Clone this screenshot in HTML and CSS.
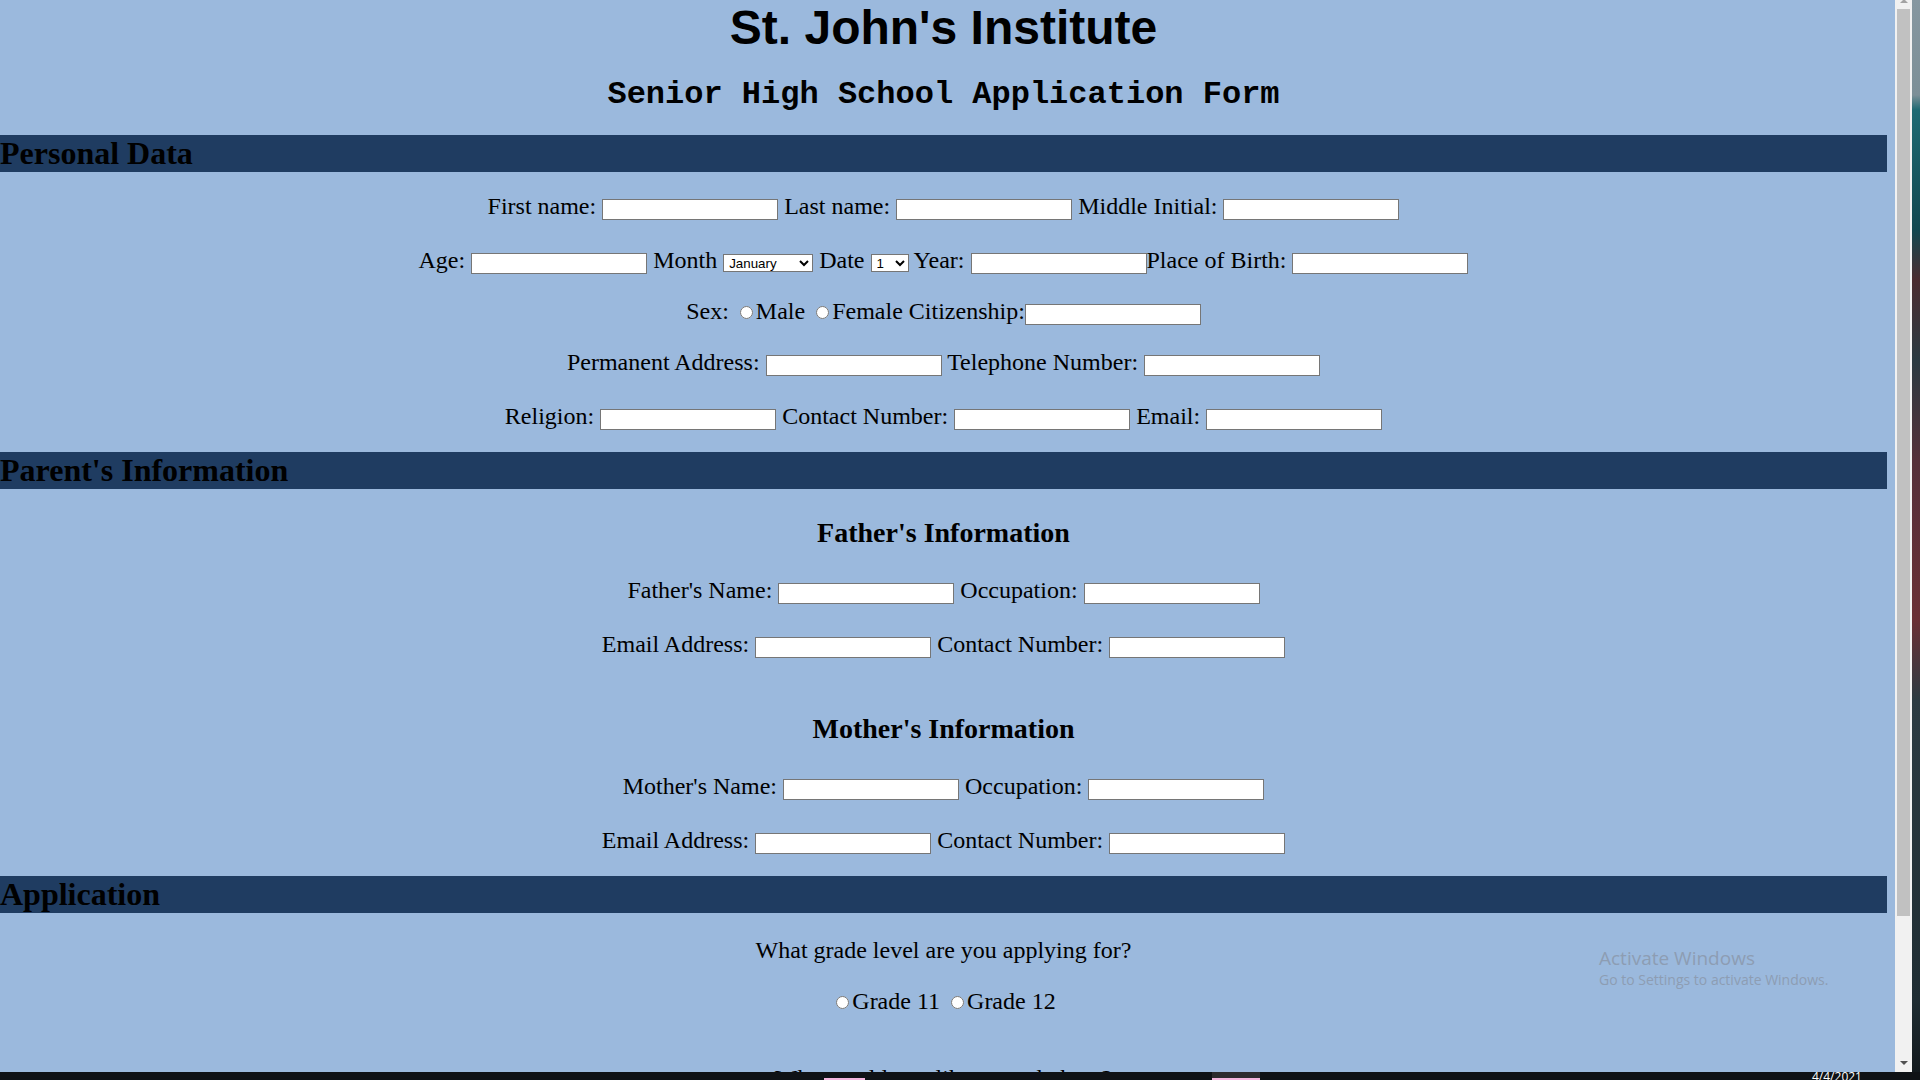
FILE: index.html
```html
<!DOCTYPE html>
<html lang="en">
<head>
<meta charset="utf-8">
<title>St. John's Institute - Application Form</title>
<link rel="stylesheet" href="styles.css">
</head>
<body>
<div class="screen">
  <div class="window">
    <main class="page">
      <div class="content">
        <h1 class="title">St. John's Institute</h1>
        <h2 class="subtitle">Senior High School Application Form</h2>

        <section class="section">
          <h2 class="bar bar-personal">Personal Data</h2>
          <div class="row p1">First name: <input class="field" type="text"> Last name: <input class="field" type="text"> Middle Initial: <input class="field" type="text"></div>
          <div class="row p2">Age: <input class="field" type="text"> Month <select class="pick pick-month"><option>January</option><option>February</option><option>March</option><option>April</option><option>May</option><option>June</option><option>July</option><option>August</option><option>September</option><option>October</option><option>November</option><option>December</option></select> Date <select class="pick pick-date"><option>1</option><option>2</option><option>3</option><option>4</option><option>5</option><option>6</option><option>7</option><option>8</option><option>9</option><option>10</option><option>11</option><option>12</option><option>13</option><option>14</option><option>15</option><option>16</option><option>17</option><option>18</option><option>19</option><option>20</option><option>21</option><option>22</option><option>23</option><option>24</option><option>25</option><option>26</option><option>27</option><option>28</option><option>29</option><option>30</option><option>31</option></select> Year: <input class="field" type="text">Place of Birth: <input class="field" type="text"></div>
          <div class="row p3">Sex: <input class="radio" type="radio" name="sex">Male <input class="radio" type="radio" name="sex">Female Citizenship:<input class="field" type="text"></div>
          <div class="row p4">Permanent Address: <input class="field" type="text"> Telephone Number: <input class="field" type="text"></div>
          <div class="row p5">Religion: <input class="field" type="text"> Contact Number: <input class="field" type="text"> Email: <input class="field" type="text"></div>
        </section>

        <section class="section">
          <h2 class="bar bar-parents">Parent's Information</h2>
          <h3 class="heading father-head">Father's Information</h3>
          <div class="row f1">Father's Name: <input class="field" type="text"> Occupation: <input class="field" type="text"></div>
          <div class="row f2">Email Address: <input class="field" type="text"> Contact Number: <input class="field" type="text"></div>
          <h3 class="heading mother-head">Mother's Information</h3>
          <div class="row m1">Mother's Name: <input class="field" type="text"> Occupation: <input class="field" type="text"></div>
          <div class="row m2">Email Address: <input class="field" type="text"> Contact Number: <input class="field" type="text"></div>
        </section>

        <section class="section">
          <h2 class="bar bar-app">Application</h2>
          <div class="row a1">What grade level are you applying for?</div>
          <div class="row a2"><input class="radio" type="radio" name="grade">Grade 11 <input class="radio" type="radio" name="grade">Grade 12</div>
          <div class="row a3">Why would you like to study here?</div>
        </section>
      </div>

      <div class="watermark">
        <div class="wm-title">Activate Windows</div>
        <div class="wm-sub">Go to Settings to activate Windows.</div>
      </div>
    </main>

    <div class="scrollbar">
      <span class="arrow-up"></span>
      <span class="thumb"></span>
      <span class="arrow-down"></span>
    </div>

    <div class="desktop"></div>
  </div>

  <div class="taskbar">
    <span class="task task-one"></span>
    <span class="task task-two"></span>
    <span class="clock">4/4/2021</span>
  </div>
</div>
</body>
</html>
```

FILE: styles.css
```css
html, body {
  margin: 0;
  padding: 0;
  height: 100%;
  overflow: hidden;
}

body {
  background: #0f1216;
  font-family: "Liberation Serif", "Times New Roman", serif;
  color: #000;
}

.screen {
  width: 1920px;
  height: 1080px;
  display: flex;
  flex-direction: column;
}

.window {
  display: flex;
  height: 1072px;
  flex: none;
}

.page {
  position: relative;
  width: 1895px;
  flex: none;
  background: #9bb9dd;
  overflow: hidden;
}

.content {
  width: 1887px;
}

.title {
  font-family: "Liberation Sans", Arial, sans-serif;
  font-weight: bold;
  font-size: 48px;
  line-height: 55px;
  margin: 0;
  text-align: center;
}

.subtitle {
  font-family: "Liberation Mono", "Courier New", monospace;
  font-weight: bold;
  font-size: 32px;
  line-height: 36px;
  margin: 22px 0 0;
  text-align: center;
}

.bar {
  background: #1f3c61;
  font-size: 32px;
  font-weight: bold;
  line-height: 37px;
  height: 37px;
  margin: 0;
  padding: 0;
  text-align: left;
}

.bar-personal { margin-top: 22px; }
.bar-parents { margin-top: 21px; }
.bar-app { margin-top: 21px; }

.row {
  font-size: 24px;
  line-height: 30px;
  text-align: center;
  white-space: nowrap;
}

.p1 { margin-top: 19px; }
.p2 { margin-top: 24px; }
.p3 { margin-top: 21px; }
.p4 { margin-top: 21px; }
.p5 { margin-top: 24px; }

.heading {
  font-size: 28px;
  font-weight: bold;
  line-height: 32px;
  text-align: center;
  margin: 0;
}

.father-head { margin-top: 28px; }
.f1 { margin-top: 26px; }
.f2 { margin-top: 24px; }
.mother-head { margin-top: 54px; }
.m1 { margin-top: 26px; }
.m2 { margin-top: 24px; }

.a1 { margin-top: 22px; }
.a2 { margin-top: 21px; }
.a3 { margin-top: 47px; }

.field {
  box-sizing: border-box;
  width: 176px;
  height: 21px;
  margin: 0;
  padding: 1px 2px;
  border: 1px solid #767676;
  border-radius: 0;
  background: #fff;
  font-family: "Liberation Sans", Arial, sans-serif;
  font-size: 13.333px;
  vertical-align: baseline;
}

.pick {
  box-sizing: border-box;
  height: 18px;
  margin: 0;
  padding: 0 0 0 1px;
  border: 1px solid #767676;
  border-radius: 0;
  background-color: #fff;
  color: #000;
  font-family: "Liberation Sans", Arial, sans-serif;
  font-size: 13.333px;
  vertical-align: baseline;
}

.pick-month { width: 90px; }
.pick-date { width: 38px; }

.radio {
  width: 13px;
  height: 13px;
  margin: 3px 3px 0 5px;
  vertical-align: baseline;
}

.watermark {
  position: absolute;
  left: 1599px;
  top: 945px;
  font-family: "Open Sans", "Noto Sans", sans-serif;
  color: #8d9db3;
  pointer-events: none;
}

.wm-title {
  font-size: 19px;
  line-height: 26px;
}

.wm-sub {
  font-size: 14px;
  line-height: 20px;
  margin-top: -1px;
}

.scrollbar {
  width: 17px;
  flex: none;
  background: #f1f1f1;
  display: flex;
  flex-direction: column;
  align-items: center;
}

.arrow-up {
  width: 0;
  height: 0;
  border-left: 4px solid transparent;
  border-right: 4px solid transparent;
  border-bottom: 4px solid #a3a3a3;
  margin-top: -1px;
}

.thumb {
  width: 13px;
  height: 907px;
  margin-top: 6px;
  background: #c1c1c1;
}

.arrow-down {
  width: 0;
  height: 0;
  border-left: 4px solid transparent;
  border-right: 4px solid transparent;
  border-top: 4px solid #505050;
  margin-top: auto;
  margin-bottom: 7px;
}

.desktop {
  width: 8px;
  flex: none;
  background: linear-gradient(to bottom,
    #8697a0 0,
    #7c8f97 95px,
    #1d6a73 110px,
    #12474f 230px,
    #4b2c30 280px,
    #2a3a41 360px,
    #55303a 460px,
    #6a2f35 620px,
    #2c3b42 700px,
    #1f2d33 1000px,
    #12191d 1072px);
}

.taskbar {
  height: 8px;
  flex: none;
  background: #0f1216;
  display: flex;
  align-items: stretch;
  overflow: hidden;
}

.task {
  display: block;
  flex: none;
  box-sizing: border-box;
}

.task-one {
  width: 41px;
  margin-left: 824px;
  border-bottom: 2px solid #f3b6de;
}

.task-two {
  width: 48px;
  margin-left: 347px;
  background: #2b2b2d;
  border-bottom: 2px solid #f3b6de;
}

.clock {
  flex: none;
  margin-left: 552px;
  margin-top: -3px;
  font-family: "Open Sans", sans-serif;
  font-size: 12px;
  line-height: 16px;
  color: #fff;
}
```
